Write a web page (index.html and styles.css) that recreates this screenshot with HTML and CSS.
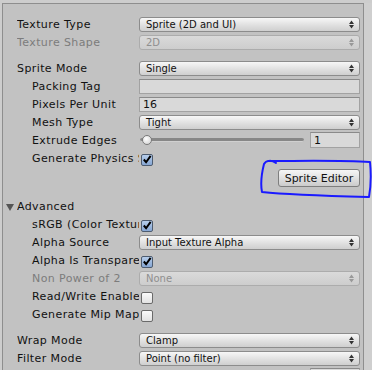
FILE: index.html
```html
<!DOCTYPE html>
<html>
<head>
<meta charset="utf-8">
<link rel="stylesheet" href="styles.css">
</head>
<body>
<div class="frame">
  <div class="panel">
    <div class="row">
      <div class="label">Texture Type</div>
      <div class="dropdown"><span>Sprite (2D and UI)</span><svg class="arr" width="5" height="9" viewBox="0 0 5 9"><path d="M0 4 L2.5 0.5 L5 4 Z M0 5 L2.5 8.5 L5 5 Z"/></svg></div>
    </div>
    <div class="row">
      <div class="label disabled">Texture Shape</div>
      <div class="dropdown off"><span>2D</span><svg class="arr" width="5" height="9" viewBox="0 0 5 9"><path d="M0 4 L2.5 0.5 L5 4 Z M0 5 L2.5 8.5 L5 5 Z"/></svg></div>
    </div>

    <div class="row gap">
      <div class="label">Sprite Mode</div>
      <div class="dropdown"><span>Single</span><svg class="arr" width="5" height="9" viewBox="0 0 5 9"><path d="M0 4 L2.5 0.5 L5 4 Z M0 5 L2.5 8.5 L5 5 Z"/></svg></div>
    </div>
    <div class="row">
      <div class="label ind">Packing Tag</div>
      <div class="field"></div>
    </div>
    <div class="row">
      <div class="label ind">Pixels Per Unit</div>
      <div class="field">16</div>
    </div>
    <div class="row">
      <div class="label ind">Mesh Type</div>
      <div class="dropdown"><span>Tight</span><svg class="arr" width="5" height="9" viewBox="0 0 5 9"><path d="M0 4 L2.5 0.5 L5 4 Z M0 5 L2.5 8.5 L5 5 Z"/></svg></div>
    </div>
    <div class="row">
      <div class="label ind">Extrude Edges</div>
      <div class="slider-wrap">
        <div class="slider"><div class="track"></div><div class="thumb"></div></div>
        <div class="field num">1</div>
      </div>
    </div>
    <div class="row">
      <div class="label ind">Generate Physics Shape</div>
      <div class="check on"><svg width="11" height="11" viewBox="0 0 11 11"><path d="M2 5.5 L4.5 8.5 L9.5 1.5" fill="none" stroke="#000" stroke-width="2.2"/></svg></div>
    </div>
    <div class="btnrow">
      <div class="button">Sprite Editor</div>
    </div>

    <div class="row adv">
      <svg class="tri" width="8" height="7" viewBox="0 0 8 7"><path d="M0 0 L8 0 L4 7 Z"/></svg>
      <div class="label advlabel">Advanced</div>
    </div>
    <div class="row">
      <div class="label ind">sRGB (Color Texture)</div>
      <div class="check on"><svg width="11" height="11" viewBox="0 0 11 11"><path d="M2 5.5 L4.5 8.5 L9.5 1.5" fill="none" stroke="#000" stroke-width="2.2"/></svg></div>
    </div>
    <div class="row">
      <div class="label ind">Alpha Source</div>
      <div class="dropdown"><span>Input Texture Alpha</span><svg class="arr" width="5" height="9" viewBox="0 0 5 9"><path d="M0 4 L2.5 0.5 L5 4 Z M0 5 L2.5 8.5 L5 5 Z"/></svg></div>
    </div>
    <div class="row">
      <div class="label ind">Alpha Is Transparency</div>
      <div class="check on"><svg width="11" height="11" viewBox="0 0 11 11"><path d="M2 5.5 L4.5 8.5 L9.5 1.5" fill="none" stroke="#000" stroke-width="2.2"/></svg></div>
    </div>
    <div class="row">
      <div class="label ind disabled">Non Power of 2</div>
      <div class="dropdown off"><span>None</span><svg class="arr" width="5" height="9" viewBox="0 0 5 9"><path d="M0 4 L2.5 0.5 L5 4 Z M0 5 L2.5 8.5 L5 5 Z"/></svg></div>
    </div>
    <div class="row">
      <div class="label ind">Read/Write Enabled</div>
      <div class="check"></div>
    </div>
    <div class="row">
      <div class="label ind">Generate Mip Maps</div>
      <div class="check"></div>
    </div>

    <div class="row gap">
      <div class="label">Wrap Mode</div>
      <div class="dropdown"><span>Clamp</span><svg class="arr" width="5" height="9" viewBox="0 0 5 9"><path d="M0 4 L2.5 0.5 L5 4 Z M0 5 L2.5 8.5 L5 5 Z"/></svg></div>
    </div>
    <div class="row">
      <div class="label">Filter Mode</div>
      <div class="dropdown"><span>Point (no filter)</span><svg class="arr" width="5" height="9" viewBox="0 0 5 9"><path d="M0 4 L2.5 0.5 L5 4 Z M0 5 L2.5 8.5 L5 5 Z"/></svg></div>
    </div>
    <div class="row">
      <div class="label">Aniso Level</div>
      <div class="slider-wrap">
        <div class="slider"><div class="track"></div><div class="thumb"></div></div>
        <div class="field num">1</div>
      </div>
    </div>
  </div>
  <div class="scroll"></div>
</div>
<svg class="scribble" width="372" height="370" viewBox="0 0 372 370">
  <path d="M276 163 C272 160 266 160 264 164 C262 172 260 182 262 192 C290 195 330 196 369 197 C371 186 371 172 370 162 C340 160 300 161 268 161" fill="none" stroke="#1a1aff" stroke-width="2" stroke-linecap="round" stroke-linejoin="round"/>
</svg>
</body>
</html>
```

FILE: styles.css
```css
html, body {
  margin: 0;
  padding: 0;
  height: 370px;
  overflow: hidden;
  background: #cdcdcd;
}
body {
  position: relative;
  font-family: "DejaVu Sans", Verdana, sans-serif;
  font-size: 11px;
  color: #111;
}
.frame {
  display: flex;
  padding: 3px 0 0 2px;
  height: 367px;
}
.panel {
  width: 362px;
  box-sizing: border-box;
  background: #c2c2c2;
  border-left: 1px solid #8e8e8e;
  border-top: 1px solid #8e8e8e;
  border-right: 1px solid #8e8e8e;
  padding: 11px 3px 0 14px;
  height: 400px;
}
.scroll {
  flex: 1;
  background: #cfcfcf;
}
.row {
  display: flex;
  align-items: center;
  height: 18px;
}
.row.gap {
  margin-top: 8px;
}
.label {
  width: 122px;
  flex: none;
  box-sizing: border-box;
  white-space: nowrap;
  overflow: hidden;
  line-height: 18px;
  padding-top: 2px;
  letter-spacing: 0.4px;
}
.label.ind {
  padding-left: 15px;
}
.label.disabled {
  color: #7c7c7c;
}
.dropdown {
  flex: 1;
  height: 15px;
  box-sizing: border-box;
  border: 1px solid #8c8c8c;
  border-radius: 3px;
  background: linear-gradient(#f7f7f7, #dedede 60%, #cfcfcf);
  display: flex;
  align-items: center;
  padding: 0 5px 0 6px;
  font-size: 10px;
  color: #111;
}
.dropdown span {
  flex: 1;
  white-space: nowrap;
  padding-top: 1px;
}
.dropdown .arr {
  fill: #333;
}
.dropdown.off {
  border-color: #acacac;
  background: linear-gradient(#dadada, #cdcdcd);
  color: #8f8f8f;
}
.dropdown.off .arr {
  fill: #999;
}
.field {
  flex: 1;
  height: 15px;
  box-sizing: border-box;
  border: 1px solid #a2a2a2;
  border-top-color: #8a8a8a;
  background: #d9d9d9;
  padding-left: 3px;
  font-size: 11px;
  line-height: 14px;
  color: #111;
}
.slider-wrap {
  flex: 1;
  display: flex;
  align-items: center;
  gap: 6px;
}
.slider {
  flex: 1;
  position: relative;
  height: 15px;
  display: flex;
  align-items: center;
  padding-left: 1px;
}
.track {
  flex: 1;
  height: 3px;
  border-radius: 2px;
  background: #878787;
  border-bottom: 1px solid #d0d0d0;
}
.thumb {
  position: absolute;
  left: 3px;
  top: 2px;
  width: 10px;
  height: 10px;
  box-sizing: border-box;
  border-radius: 50%;
  border: 1px solid #7a7a7a;
  background: radial-gradient(circle at 40% 35%, #ffffff, #dcdcdc 70%);
}
.field.num {
  flex: none;
  width: 50px;
  height: 16px;
  line-height: 15px;
}
.check {
  width: 12px;
  height: 12px;
  box-sizing: border-box;
  border: 1px solid #6a6a6a;
  border-radius: 2px;
  background: linear-gradient(#fafafa, #e2e2e2);
  margin-left: 2px;
  margin-top: 3px;
  display: flex;
  align-items: center;
  justify-content: center;
}
.check.on {
  border-color: #4d5c70;
  background: linear-gradient(#b6cdea, #86a6d3);
}
.btnrow {
  display: flex;
  justify-content: flex-end;
  margin-top: 2px;
  height: 18px;
}
.button {
  width: 82px;
  height: 18px;
  box-sizing: border-box;
  border: 1px solid #7e7e7e;
  border-radius: 3px;
  background: linear-gradient(#f6f6f6, #dddddd 60%, #cbcbcb);
  font-size: 11px;
  line-height: 17px;
  text-align: center;
  color: #111;
}
.row.adv {
  margin-top: 10px;
  position: relative;
}
.tri {
  fill: #555;
  margin-left: -11px;
  margin-right: 3px;
  margin-top: 2px;
  flex: none;
}
.label.advlabel {
  width: auto;
}
.scribble {
  position: absolute;
  left: 0;
  top: 0;
  pointer-events: none;
}
```
